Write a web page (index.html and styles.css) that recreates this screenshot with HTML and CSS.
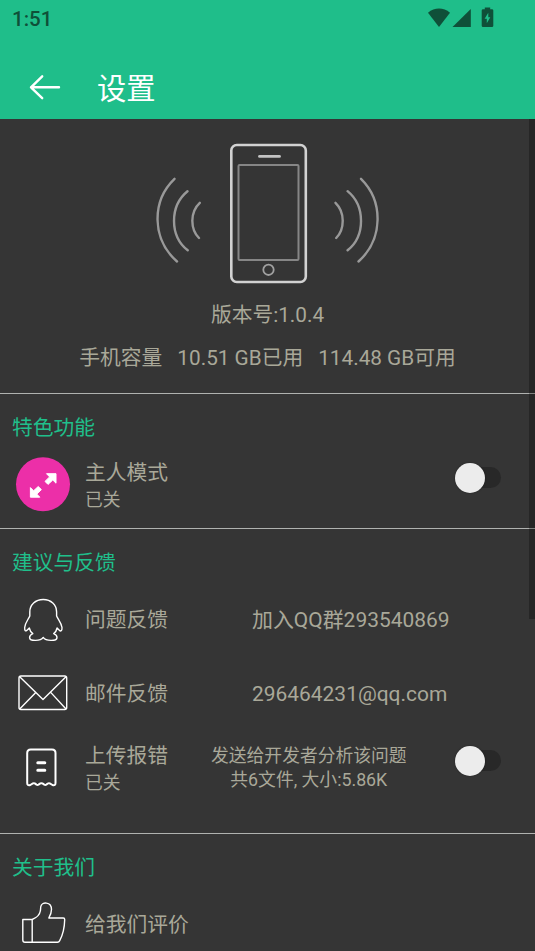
FILE: index.html
```html
<!DOCTYPE html>
<html lang="zh-CN">
<head>
<meta charset="utf-8">
<title>设置</title>
<link rel="stylesheet" href="styles.css">
</head>
<body>
<div class="screen">
  <header class="header">
    <div class="status">
      <span class="clock">1:51</span>
      <svg class="status-icons" width="68" height="22" viewBox="427 7 68 22" fill="#0f5039">
        <path d="M428 12.8C434.5 7.2 443.5 7.2 450 12.8L439 27Z"/>
        <path d="M470.8 9V27H452.5Z"/>
        <path fill-rule="evenodd" d="M484.8 7.6h5.4v1.6h1.8q1.3 0 1.3 1.3v15.2q0 1.3-1.3 1.3h-9q-1.300 0-1.300-1.300v-15.200q0-1.300 1.300-1.300h1.800zM488.300 12.800l-3.700 6h2.200v4.400l3.500-6h-2z"/>
      </svg>
    </div>
    <div class="appbar">
      <svg class="back" width="32" height="26" viewBox="29 74 32 26" fill="none" stroke="#fff" stroke-width="2.400" stroke-linecap="round" stroke-linejoin="round">
        <path d="M59 87.300H31M42.200 76.300L31 87.300L42.200 98.200"/>
      </svg>
      <h1 class="title">设置</h1>
    </div>
  </header>

  <main class="content">
    <div class="scrollbar"></div>
    <section class="hero">
      <svg class="phone" width="228" height="144" viewBox="154 142 228 144" fill="none" stroke-linecap="round">
        <rect x="231.300" y="145" width="74.500" height="137" rx="5.500" stroke="#d2d2d2" stroke-width="2.600"/>
        <rect x="238.500" y="165" width="60" height="95" rx="1" stroke="#868686" stroke-width="2"/>
        <path d="M259.500 156.400H279.500" stroke="#c4c4c4" stroke-width="2.800"/>
        <circle cx="268.500" cy="269.800" r="5.200" stroke="#a0a0a0" stroke-width="1.800"/>
        <g stroke="#999" stroke-width="2.400">
          <path d="M174.500 178.800C151.500 201 151.500 239 177 261.500M187.500 191.200C169.500 206 169.500 236 187.700 250.300M199.800 202.800C190 212 190 229 199 238"/>
          <path d="M361 178.800C383.500 201 383.500 239 358.500 261.500M347.600 191.200C365.500 206 365.500 236 347.600 250.300M335.500 202.800C345 212 345 229 336.200 238"/>
        </g>
      </svg>
      <p class="version">版本号:1.0.4</p>
      <p class="storage"><span>手机容量</span><span>10.51 GB已用</span><span>114.48 GB可用</span></p>
    </section>

    <section class="section featured">
      <h2 class="heading">特色功能</h2>
      <div class="row">
        <svg class="icon" width="62" height="62" viewBox="12 453 62 62">
          <circle cx="43" cy="484.300" r="27" fill="#ec2fa8"/>
          <g fill="#fff" stroke="#fff" stroke-width="1" stroke-linejoin="round">
            <path d="M46.500 473.700H56V483.200L52.800 480L48 484.400L45 481.400L49.600 476.900Z"/>
            <path d="M39.800 497.200H30.400V487.600L33.600 490.800L38.200 486.500L41.400 489.600L36.800 494.100Z"/>
          </g>
        </svg>
        <div class="label double"><span>主人模式</span><small>已关</small></div>
        <span class="switch"></span>
      </div>
    </section>

    <section class="section feedback">
      <h2 class="heading">建议与反馈</h2>
      <div class="row">
        <svg class="icon" width="62" height="62" viewBox="12 588 62 62" fill="none" stroke="#fff" stroke-width="1.400" stroke-linejoin="round">
          <path d="M43.200 599.500C35.500 599.500 29.800 604.800 29.800 612V616C28 620 25 623 24.700 627.500C24.500 631 25.700 631.600 27 630.200L29.300 628C29.800 630.500 31 632.300 32.800 633.600C30.600 634.600 29.400 636 29.600 637.800C30 641.300 40.500 641.300 43.200 637.400C46 641.300 56.500 641.300 57 637.800C57.200 636 56 634.600 53.700 633.600C55.400 632.300 56.600 630.500 57.100 628L59.300 630.200C60.600 631.600 62.200 631 62 627.500C61.500 623 58.500 620 56.600 616V612C56.600 604.800 51 599.500 43.200 599.500Z"/>
        </svg>
        <div class="label wide"><span>问题反馈</span></div>
        <span class="value">加入QQ群293540869</span>
      </div>
      <div class="row">
        <svg class="icon" width="62" height="62" viewBox="12 662 62 62" fill="none" stroke="#fff" stroke-width="1.400" stroke-linejoin="round">
          <rect x="19" y="676" width="47.700" height="33.500" rx="2"/>
          <path d="M19.700 676.700L43 699.500L66 676.700M19.700 709L35.800 692.400M66 709L50.700 692.400"/>
        </svg>
        <div class="label wide"><span>邮件反馈</span></div>
        <span class="value">296464231@qq.com</span>
      </div>
      <div class="row">
        <svg class="icon" width="62" height="62" viewBox="12 736 62 62" fill="none" stroke="#fff" stroke-width="2" stroke-linecap="round" stroke-linejoin="round">
          <path d="M27.200 783V753Q27.200 749.500 30.700 749.500H52Q55.500 749.500 55.500 753V783Q55.500 786 52.500 785L49.800 783.400Q48.800 782.900 47.800 783.500L46.300 784.600Q45.300 785.200 44.300 784.600L42.400 783.400Q41.400 782.900 40.400 783.400L38.500 784.600Q37.500 785.200 36.500 784.600L34.800 783.400Q33.800 782.900 32.900 783.400L30.300 785Q27.200 786 27.200 783Z"/>
          <path d="M37.800 762.700H44.800M37.800 770.200H44.800" stroke-width="3"/>
        </svg>
        <div class="label double narrow"><span>上传报错</span><small>已关</small></div>
        <div class="note">发送给开发者分析该问题<br>共6文件, 大小:5.86K</div>
        <span class="switch"></span>
      </div>
    </section>

    <section class="section about">
      <h2 class="heading">关于我们</h2>
      <div class="row">
        <svg class="icon" width="62" height="62" viewBox="12 893 62 62" fill="none" stroke="#fff" stroke-width="1.400" stroke-linejoin="round">
          <path d="M32.200 919.500C37 917.500 39.800 914.500 40.300 911C40.700 909 40.600 908 40.700 907C41.500 901.400 51.500 901.400 51.500 909.500C51.500 912.500 50.500 915 48.800 918H63.300Q64.700 918 64.700 919.500C64.500 928 62.500 935.500 59.700 940.600Q58.900 942.200 57.500 942.200H25Q22.800 942.200 22.800 940V919.500ZM32.200 919.500V942"/>
        </svg>
        <div class="label"><span>给我们评价</span></div>
      </div>
    </section>
  </main>
</div>
</body>
</html>
```
FILE: styles.css
```css
* { box-sizing: border-box; }
body, h1, h2, p { margin: 0; font-weight: 400; }
body {
  background: #353535;
  color: #a9a899;
  font-family: Roboto, "Noto Sans CJK SC", sans-serif;
  font-size: 20.75px;
  overflow: hidden;
}
.screen {
  display: flex;
  flex-direction: column;
  height: 951px;
  overflow: hidden;
}
.header {
  flex: none;
  height: 119px;
  background: #1fbe8a;
}
.status {
  display: flex;
  align-items: center;
  justify-content: space-between;
  height: 37px;
  padding: 0 40px 0 12px;
}
.clock {
  color: #0f5039;
  font-size: 20.5px;
  font-weight: 500;
}
.status-icons { display: block; margin-bottom: 1px; }
.appbar {
  display: flex;
  align-items: center;
  height: 82px;
  padding: 18px 0 0 29px;
}
.back { display: block; }
.title {
  margin-left: 36px;
  padding-top: 4px;
  color: #fff;
  font-size: 29.3px;
  line-height: 40px;
}
.content {
  position: relative;
  flex: 1;
  overflow: hidden;
}
.scrollbar {
  position: absolute;
  top: 0;
  right: 0;
  width: 6px;
  height: 500px;
  background: rgba(0, 0, 0, 0.27);
}
.hero {
  display: flex;
  flex-direction: column;
  align-items: center;
  height: 274px;
  padding-top: 23px;
}
.phone { display: block; }
.version { margin-top: 14px; line-height: 30px; }
.storage {
  display: flex;
  gap: 15px;
  margin-top: 13px;
  line-height: 30px;
  white-space: nowrap;
}
.section {
  padding-top: 13px;
  border-top: 1px solid #b0b2b0;
}
.featured { height: 135px; }
.feedback { height: 305px; }
.heading {
  height: 40px;
  padding-left: 12px;
  color: #20bf8b;
  font-size: 20.75px;
  line-height: 42px;
}
.row {
  display: flex;
  align-items: center;
  height: 74px;
  padding: 0 34px 0 12px;
}
.icon { flex: none; display: block; }
.label {
  display: flex;
  flex-direction: column;
  flex: none;
  margin-left: 11px;
  padding-top: 3px;
  line-height: 27px;
}
.double { padding-top: 5px; }
.label small { font-size: 17.8px; line-height: 26px; }
.wide { width: 167px; }
.narrow { width: 126px; }
.value {
  padding-top: 2px;
  font-size: 20.95px;
  line-height: 26px;
  white-space: nowrap;
}
.note {
  padding-top: 2px;
  font-size: 17.8px;
  line-height: 24.5px;
  text-align: center;
  white-space: nowrap;
}
.switch {
  display: flex;
  align-items: center;
  width: 40px;
  height: 21px;
  margin: -13px 0 0 auto;
  border-radius: 11px;
  background: #282828;
}
.switch::before {
  content: "";
  flex: none;
  width: 30px;
  height: 30px;
  margin-left: -6px;
  border-radius: 50%;
  background: #ececec;
  box-shadow: 0 0 2px rgba(0, 0, 0, 0.35);
}
```
